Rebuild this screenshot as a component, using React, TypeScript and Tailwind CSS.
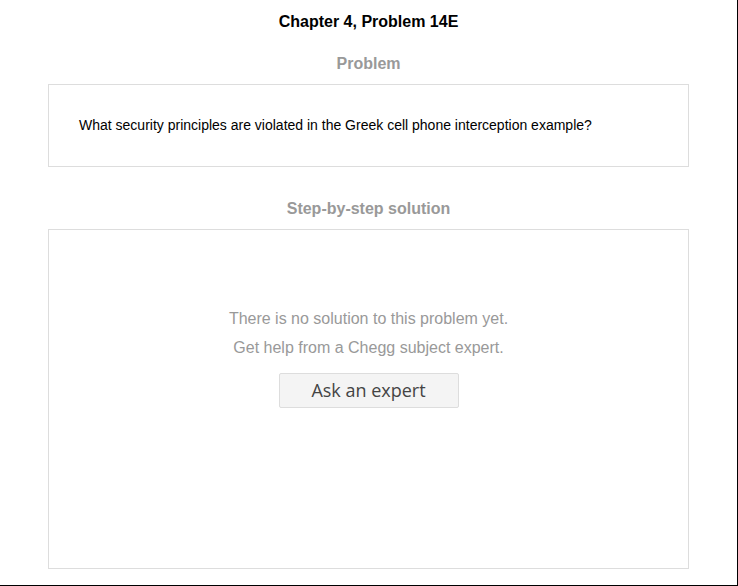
export default function App() {
  return (
    <div className="w-[738px] h-[586px] bg-white border-r border-b border-black font-['Liberation_Sans',Arial,sans-serif] overflow-hidden">
      <div className="w-[641px] mx-auto">
        {/* title */}
        <h1 className="pt-[13px] text-center text-[16px] leading-[18px] font-bold text-black">Chapter 4, Problem 14E</h1>

        <h2 className="mt-[24px] text-center text-[16px] leading-[18px] font-bold text-[#999]">Problem</h2>
        <div className="mt-[11px] h-[83px] border border-[#ddd] flex items-center px-[30px]">
          <p className="text-[14px] text-black">What security principles are violated in the Greek cell phone interception example?</p>
        </div>

        <h2 className="mt-[33px] text-center text-[16px] leading-[18px] font-bold text-[#999]">Step-by-step solution</h2>
        <div className="mt-[11px] h-[340px] border border-[#ddd] flex flex-col items-center pt-[74px]">
          <p className="text-[16px] leading-[29px] text-[#999]">There is no solution to this problem yet.</p>
          <p className="text-[16px] leading-[29px] text-[#999]">Get help from a Chegg subject expert.</p>
          <button className="mt-[11px] w-[180px] h-[35px] bg-[#f4f4f4] border border-[#ddd] rounded-[2px] text-[18px] text-[#444] font-['Open_Sans',sans-serif]">
            Ask an expert
          </button>
        </div>
      </div>
    </div>
  );
}
